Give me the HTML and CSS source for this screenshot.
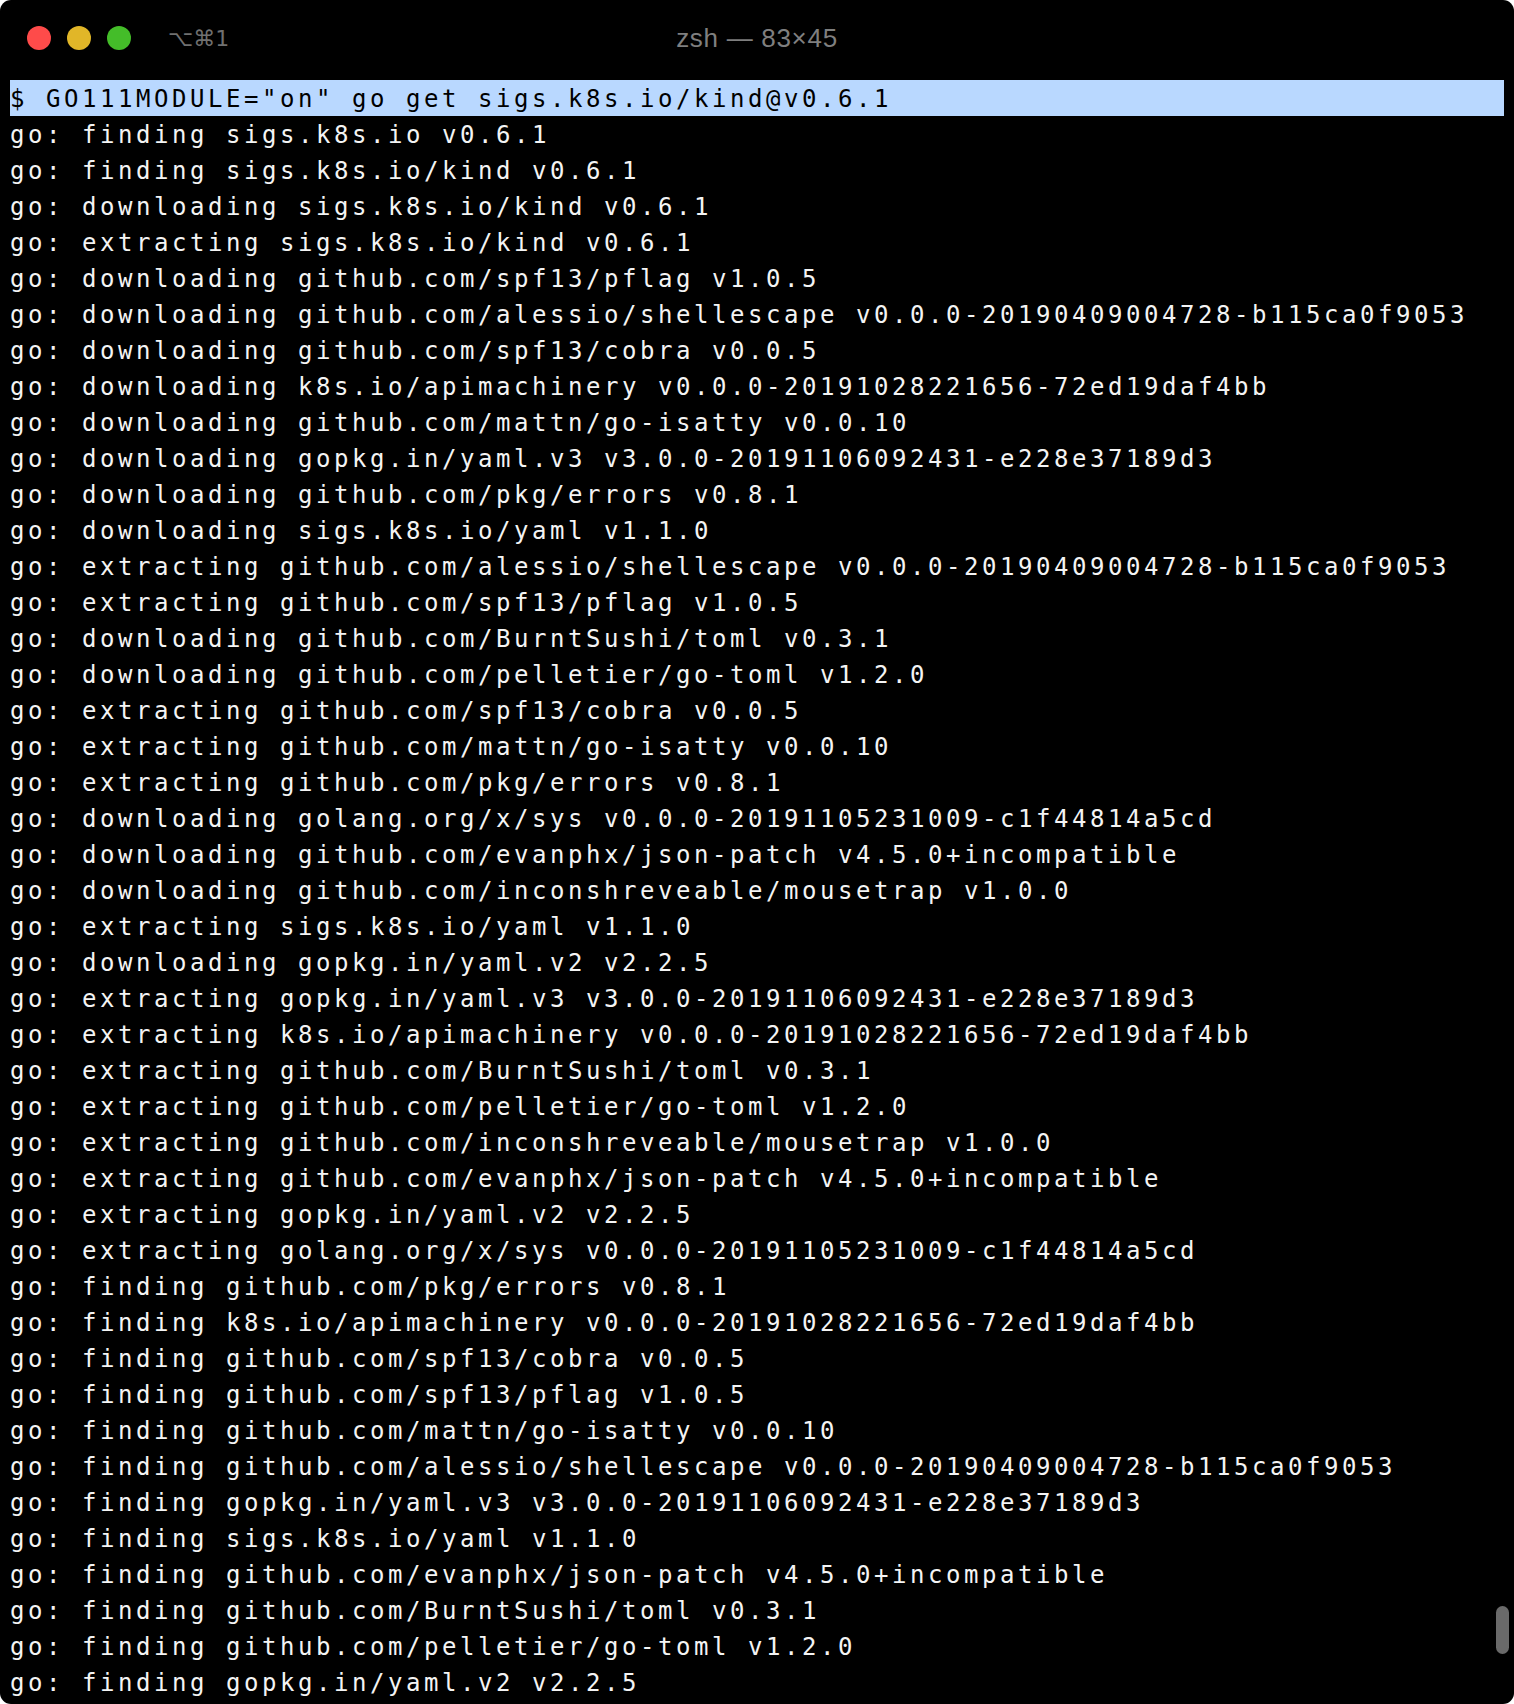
FILE: index.html
```html
<!DOCTYPE html>
<html>
<head>
<meta charset="utf-8">
<link rel="stylesheet" href="styles.css">
</head>
<body>
<div class="window">
  <div class="titlebar">
    <div class="left">
      <span class="light red"></span>
      <span class="light yellow"></span>
      <span class="light green"></span>
      <span class="shortcut">⌥⌘1</span>
    </div>
    <div class="title">zsh — 83×45</div>
    <div class="right"></div>
  </div>
  <div class="term">
    <div class="line sel">$ GO111MODULE="on" go get sigs.k8s.io/kind@v0.6.1</div>
    <div class="line">go: finding sigs.k8s.io v0.6.1</div>
    <div class="line">go: finding sigs.k8s.io/kind v0.6.1</div>
    <div class="line">go: downloading sigs.k8s.io/kind v0.6.1</div>
    <div class="line">go: extracting sigs.k8s.io/kind v0.6.1</div>
    <div class="line">go: downloading github.com/spf13/pflag v1.0.5</div>
    <div class="line">go: downloading github.com/alessio/shellescape v0.0.0-20190409004728-b115ca0f9053</div>
    <div class="line">go: downloading github.com/spf13/cobra v0.0.5</div>
    <div class="line">go: downloading k8s.io/apimachinery v0.0.0-20191028221656-72ed19daf4bb</div>
    <div class="line">go: downloading github.com/mattn/go-isatty v0.0.10</div>
    <div class="line">go: downloading gopkg.in/yaml.v3 v3.0.0-20191106092431-e228e37189d3</div>
    <div class="line">go: downloading github.com/pkg/errors v0.8.1</div>
    <div class="line">go: downloading sigs.k8s.io/yaml v1.1.0</div>
    <div class="line">go: extracting github.com/alessio/shellescape v0.0.0-20190409004728-b115ca0f9053</div>
    <div class="line">go: extracting github.com/spf13/pflag v1.0.5</div>
    <div class="line">go: downloading github.com/BurntSushi/toml v0.3.1</div>
    <div class="line">go: downloading github.com/pelletier/go-toml v1.2.0</div>
    <div class="line">go: extracting github.com/spf13/cobra v0.0.5</div>
    <div class="line">go: extracting github.com/mattn/go-isatty v0.0.10</div>
    <div class="line">go: extracting github.com/pkg/errors v0.8.1</div>
    <div class="line">go: downloading golang.org/x/sys v0.0.0-20191105231009-c1f44814a5cd</div>
    <div class="line">go: downloading github.com/evanphx/json-patch v4.5.0+incompatible</div>
    <div class="line">go: downloading github.com/inconshreveable/mousetrap v1.0.0</div>
    <div class="line">go: extracting sigs.k8s.io/yaml v1.1.0</div>
    <div class="line">go: downloading gopkg.in/yaml.v2 v2.2.5</div>
    <div class="line">go: extracting gopkg.in/yaml.v3 v3.0.0-20191106092431-e228e37189d3</div>
    <div class="line">go: extracting k8s.io/apimachinery v0.0.0-20191028221656-72ed19daf4bb</div>
    <div class="line">go: extracting github.com/BurntSushi/toml v0.3.1</div>
    <div class="line">go: extracting github.com/pelletier/go-toml v1.2.0</div>
    <div class="line">go: extracting github.com/inconshreveable/mousetrap v1.0.0</div>
    <div class="line">go: extracting github.com/evanphx/json-patch v4.5.0+incompatible</div>
    <div class="line">go: extracting gopkg.in/yaml.v2 v2.2.5</div>
    <div class="line">go: extracting golang.org/x/sys v0.0.0-20191105231009-c1f44814a5cd</div>
    <div class="line">go: finding github.com/pkg/errors v0.8.1</div>
    <div class="line">go: finding k8s.io/apimachinery v0.0.0-20191028221656-72ed19daf4bb</div>
    <div class="line">go: finding github.com/spf13/cobra v0.0.5</div>
    <div class="line">go: finding github.com/spf13/pflag v1.0.5</div>
    <div class="line">go: finding github.com/mattn/go-isatty v0.0.10</div>
    <div class="line">go: finding github.com/alessio/shellescape v0.0.0-20190409004728-b115ca0f9053</div>
    <div class="line">go: finding gopkg.in/yaml.v3 v3.0.0-20191106092431-e228e37189d3</div>
    <div class="line">go: finding sigs.k8s.io/yaml v1.1.0</div>
    <div class="line">go: finding github.com/evanphx/json-patch v4.5.0+incompatible</div>
    <div class="line">go: finding github.com/BurntSushi/toml v0.3.1</div>
    <div class="line">go: finding github.com/pelletier/go-toml v1.2.0</div>
    <div class="line">go: finding gopkg.in/yaml.v2 v2.2.5</div>
  </div>
  <div class="scrollthumb"></div>
</div>
</body>
</html>
```

FILE: styles.css
```css
html, body {
  margin: 0;
  padding: 0;
  background: #ffffff;
}

.window {
  position: relative;
  width: 1514px;
  height: 1704px;
  background: #000000;
  border-radius: 11px;
  overflow: hidden;
}

.titlebar {
  height: 80px;
  display: grid;
  grid-template-columns: 1fr auto 1fr;
  align-items: center;
  padding-bottom: 5px;
  box-sizing: border-box;
}

.left {
  display: flex;
  align-items: center;
  padding-left: 27px;
  gap: 16px;
}

.light {
  width: 24px;
  height: 24px;
  border-radius: 50%;
  display: block;
}

.red { background: #fe4b4a; }
.yellow { background: #e1b628; }
.green { background: #44bd29; }

.shortcut {
  margin-left: 21px;
  font-family: "DejaVu Sans", "Liberation Sans", sans-serif;
  font-size: 22px;
  color: #707070;
  padding-top: 2px;
}

.title {
  font-family: "Liberation Sans", "DejaVu Sans", sans-serif;
  font-size: 26px;
  color: #7f7f7f;
  letter-spacing: 0.7px;
  padding-top: 2px;
}

.term {
  padding-left: 10px;
  width: 1494px;
  font-family: "DejaVu Sans Mono", "Liberation Mono", monospace;
  font-size: 24px;
  letter-spacing: 3.55px;
  line-height: 36px;
  color: #f4f4f4;
}

.line {
  height: 36px;
  padding-top: 1px;
  box-sizing: border-box;
  white-space: pre;
}

.sel {
  background: #b9d8ff;
  color: #000000;
}

.scrollthumb {
  position: absolute;
  left: 1496px;
  top: 1606px;
  width: 13px;
  height: 48px;
  border-radius: 7px;
  background: #6a6a6a;
}
```
